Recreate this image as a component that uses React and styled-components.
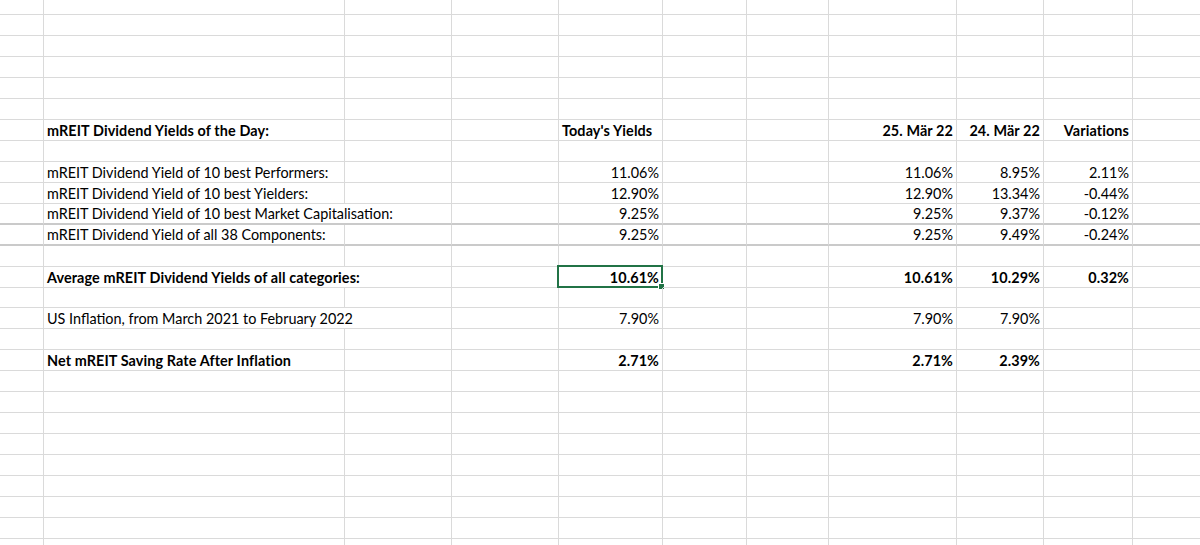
import React from "react";
import styled, { createGlobalStyle } from "styled-components";

const GlobalStyle = createGlobalStyle`
  html, body {
    margin: 0;
    padding: 0;
    background: #ffffff;
    overflow: hidden;
  }
  body {
    font-family: "Lato", "Liberation Sans", sans-serif;
    color: #000000;
  }
`;

const COLS = "44px 301px 107px 107px 104px 84px 82px 128px 87px 89px 1fr";
const GRID = "#dadada";
const GRID_DARK = "#cacaca";

const Sheet = styled.div`
  display: flex;
  flex-direction: column;
  width: 1200px;
`;

const Row = styled.div`
  display: grid;
  grid-template-columns: ${COLS};
  height: ${(p) => p.$h}px;
`;

const Cell = styled.div`
  position: relative;
  box-sizing: border-box;
  display: flex;
  align-items: flex-end;
  justify-content: ${(p) => (p.$align === "right" ? "flex-end" : "flex-start")};
  padding: 0 3px 1px 3px;
  border-bottom: ${(p) => (p.$thick ? 2 : 1)}px solid ${(p) => (p.$thick ? GRID_DARK : GRID)};
  border-right: ${(p) => (p.$spill || p.$last ? "none" : `1px solid ${GRID}`)};
  font-size: 14.4px;
  line-height: 17px;
  font-weight: ${(p) => (p.$bold ? 700 : 400)};
  letter-spacing: ${(p) => (p.$bold ? "0.1px" : "0")};
  white-space: nowrap;
  overflow: visible;
`;

const Selection = styled.div`
  position: absolute;
  left: -2px;
  top: -2px;
  right: -1px;
  bottom: -1px;
  border: 2px solid #217346;
  pointer-events: none;
`;

const Handle = styled.div`
  position: absolute;
  right: -4px;
  bottom: -4px;
  width: 5px;
  height: 5px;
  background: #217346;
  border: 1px solid #ffffff;
`;

// columns: 0 A, 1 B (labels), 2 C, 3 D, 4 E (today), 5 F, 6 G, 7 H (25 Mär), 8 I (24 Mär), 9 J (variations), 10 K
const content = {
  6: {
    bold: true,
    cells: { 1: "mREIT Dividend Yields of the Day:", 4: "Today's Yields", 7: "25. Mär 22", 8: "24. Mär 22", 9: "Variations" },
    left: [1, 4],
  },
  8: { cells: { 1: "mREIT Dividend Yield of 10 best Performers:", 4: "11.06%", 7: "11.06%", 8: "8.95%", 9: "2.11%" } },
  9: { cells: { 1: "mREIT Dividend Yield of 10 best Yielders:", 4: "12.90%", 7: "12.90%", 8: "13.34%", 9: "-0.44%" } },
  10: {
    spill: true,
    thick: true,
    cells: { 1: "mREIT Dividend Yield of 10 best Market Capitalisation:", 4: "9.25%", 7: "9.25%", 8: "9.37%", 9: "-0.12%" },
  },
  11: { thick: true, cells: { 1: "mREIT Dividend Yield of all 38 Components:", 4: "9.25%", 7: "9.25%", 8: "9.49%", 9: "-0.24%" } },
  13: {
    bold: true,
    spill: true,
    selected: 4,
    cells: { 1: "Average mREIT Dividend Yields of all categories:", 4: "10.61%", 7: "10.61%", 8: "10.29%", 9: "0.32%" },
  },
  15: { spill: true, cells: { 1: "US Inflation, from March 2021 to February 2022", 4: "7.90%", 7: "7.90%", 8: "7.90%" } },
  17: { bold: true, cells: { 1: "Net mREIT Saving Rate After Inflation", 4: "2.71%", 7: "2.71%", 8: "2.39%" } },
};

const rowHeights = Array.from({ length: 27 }, (_, i) => {
  if (i === 0) return 15;
  if (i === 14) return 20;
  return 21;
});

export default function App() {
  return (
    <>
      <GlobalStyle />
      <Sheet>
        {rowHeights.map((h, r) => {
          const row = content[r] || { cells: {} };
          return (
            <Row key={r} $h={h}>
              {Array.from({ length: 11 }, (_, c) => {
                const text = row.cells[c];
                const isLeft = c === 1 || (row.left && row.left.includes(c));
                return (
                  <Cell
                    key={c}
                    $align={isLeft ? "left" : "right"}
                    $bold={row.bold}
                    $thick={row.thick}
                    $spill={c === 1 && row.spill}
                    $last={c === 10}
                  >
                    {text}
                    {row.selected === c && (
                      <Selection>
                        <Handle />
                      </Selection>
                    )}
                  </Cell>
                );
              })}
            </Row>
          );
        })}
      </Sheet>
    </>
  );
}
